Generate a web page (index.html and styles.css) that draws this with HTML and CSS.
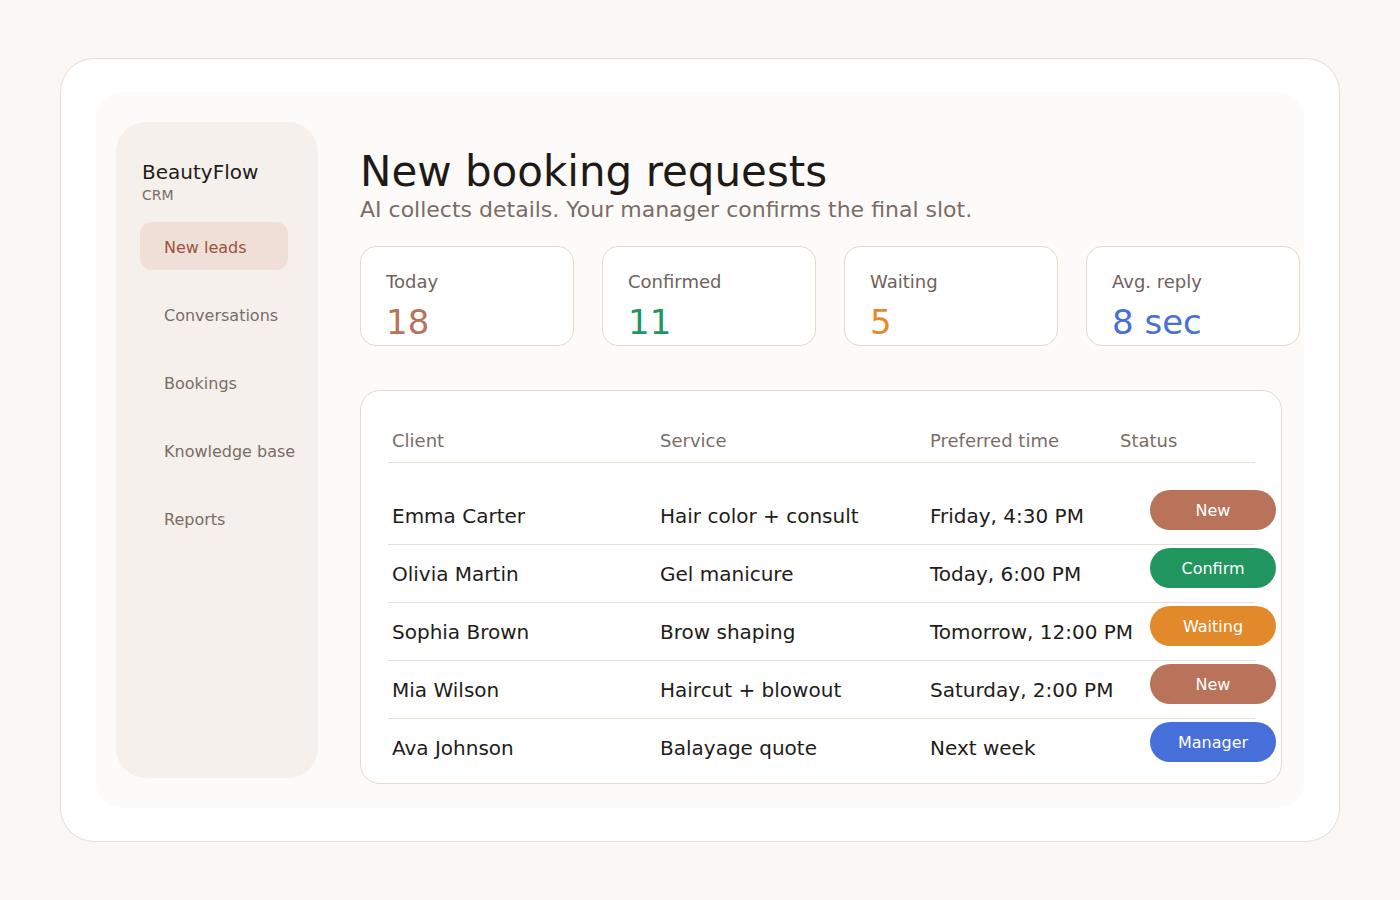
FILE: index.html
```html
<!DOCTYPE html>
<html lang="en">
<head>
    <meta charset="UTF-8">
    <meta name="viewport" content="width=device-width, initial-scale=1.0">
    <title>BeautyFlow CRM</title>
    <link rel="stylesheet" href="styles.css">
</head>
<body>
    <div class="frame">
        <div class="panel">
            <!-- Sidebar -->
            <aside class="sidebar">
                <div class="brand">BeautyFlow</div>
                <div class="brand-sub">CRM</div>
                <nav class="nav">
                    <a class="nav-item active">New leads</a>
                    <a class="nav-item">Conversations</a>
                    <a class="nav-item">Bookings</a>
                    <a class="nav-item">Knowledge base</a>
                    <a class="nav-item">Reports</a>
                </nav>
            </aside>

            <main class="main">
                <h1>New booking requests</h1>
                <p class="subtitle">AI collects details. Your manager confirms the final slot.</p>

                <!-- Stats -->
                <div class="stats">
                    <div class="stat">
                        <div class="stat-label">Today</div>
                        <div class="stat-value brown">18</div>
                    </div>
                    <div class="stat">
                        <div class="stat-label">Confirmed</div>
                        <div class="stat-value green">11</div>
                    </div>
                    <div class="stat">
                        <div class="stat-label">Waiting</div>
                        <div class="stat-value orange">5</div>
                    </div>
                    <div class="stat">
                        <div class="stat-label">Avg. reply</div>
                        <div class="stat-value blue">8 sec</div>
                    </div>
                </div>

                <!-- Requests table -->
                <div class="table-card">
                    <div class="row head">
                        <div class="cell">Client</div>
                        <div class="cell">Service</div>
                        <div class="cell">Preferred time</div>
                        <div class="cell">Status</div>
                    </div>
                    <div class="row first">
                        <div class="cell">Emma Carter</div>
                        <div class="cell">Hair color + consult</div>
                        <div class="cell">Friday, 4:30 PM</div>
                        <div class="cell"><span class="pill brown-bg">New</span></div>
                    </div>
                    <div class="row">
                        <div class="cell">Olivia Martin</div>
                        <div class="cell">Gel manicure</div>
                        <div class="cell">Today, 6:00 PM</div>
                        <div class="cell"><span class="pill green-bg">Confirm</span></div>
                    </div>
                    <div class="row">
                        <div class="cell">Sophia Brown</div>
                        <div class="cell">Brow shaping</div>
                        <div class="cell">Tomorrow, 12:00 PM</div>
                        <div class="cell"><span class="pill orange-bg">Waiting</span></div>
                    </div>
                    <div class="row">
                        <div class="cell">Mia Wilson</div>
                        <div class="cell">Haircut + blowout</div>
                        <div class="cell">Saturday, 2:00 PM</div>
                        <div class="cell"><span class="pill brown-bg">New</span></div>
                    </div>
                    <div class="row last">
                        <div class="cell">Ava Johnson</div>
                        <div class="cell">Balayage quote</div>
                        <div class="cell">Next week</div>
                        <div class="cell"><span class="pill blue-bg">Manager</span></div>
                    </div>
                </div>
            </main>
        </div>
    </div>
</body>
</html>
```

FILE: styles.css
```css
* {
    box-sizing: border-box;
}
body {
    margin: 0;
    padding: 58px 60px;
    background-color: #faf7f4;
    font-family: "DejaVu Sans", sans-serif;
    color: #221c19;
}
.frame {
    height: 784px;
    padding: 33px 35px;
    background-color: #fff;
    border: 1px solid #e8dcd2;
    border-radius: 34px;
}
.panel {
    display: flex;
    gap: 42px;
    height: 716px;
    padding: 30px 4px 30px 20px;
    background-color: #fdfbf9;
    border-radius: 26px;
}

/* Sidebar */
.sidebar {
    width: 202px;
    flex-shrink: 0;
    padding: 38px 0 0 24px;
    background-color: #f5f0ec;
    border-radius: 30px;
}
.brand {
    margin-left: 2px;
    font-size: 20px;
    line-height: 24px;
    color: #221c19;
}
.brand-sub {
    margin: 3px 0 0 2px;
    font-size: 14px;
    line-height: 17px;
    color: #7a6d66;
}
.nav {
    display: flex;
    flex-direction: column;
    gap: 20px;
    margin-top: 18px;
}
.nav-item {
    display: block;
    width: 148px;
    height: 48px;
    padding-left: 24px;
    font-size: 16px;
    line-height: 51px;
    white-space: nowrap;
    color: #7a6d66;
    border-radius: 12px;
}
.nav-item.active {
    background-color: #f0dfd7;
    color: #9a5340;
}

/* Main */
.main {
    flex: none;
    width: 940px;
    min-width: 0;
    padding-top: 25px;
}
h1 {
    margin: 0;
    font-size: 42px;
    font-weight: normal;
    line-height: 50px;
    color: #201a17;
}
.subtitle {
    margin: 0;
    font-size: 22px;
    line-height: 26px;
    color: #7a6d66;
}
.stats {
    display: grid;
    grid-template-columns: repeat(4, 214px);
    gap: 28px;
    margin-top: 23px;
}
.stat {
    height: 100px;
    padding: 24px 25px 0;
    background-color: #fff;
    border: 1px solid #e6d8cd;
    border-radius: 16px;
}
.stat-label {
    font-size: 18px;
    line-height: 22px;
    color: #6f625b;
}
.stat-value {
    margin-top: 9px;
    font-size: 34px;
    line-height: 40px;
}
.brown { color: #b8735a; }
.green { color: #1f955f; }
.orange { color: #e48a2d; }
.blue { color: #4a70d8; }

/* Table */
.table-card {
    width: 922px;
    height: 394px;
    margin-top: 44px;
    padding: 39px 26px 0 27px;
    background-color: #fff;
    border: 1px solid #e6d8cd;
    border-radius: 20px;
}
.row {
    display: grid;
    grid-template-columns: 268px 270px 190px 139px;
    padding: 17px 0 16px;
    border-bottom: 1px solid #eadfd5;
    font-size: 20px;
    line-height: 24px;
}
.row.head {
    padding: 0 0 10px;
    font-size: 18px;
    line-height: 22px;
    color: #7a6d66;
}
.row.first {
    padding-top: 41px;
}
.row.last {
    border-bottom: none;
}
.cell {
    padding-left: 4px;
    white-space: nowrap;
}
.pill {
    display: block;
    width: 126px;
    height: 40px;
    margin: -14px 0 -2px 30px;
    font-size: 16px;
    line-height: 41px;
    text-align: center;
    color: #fff;
    border-radius: 20px;
}
.brown-bg { background-color: #b8735a; }
.green-bg { background-color: #21965f; }
.orange-bg { background-color: #e2892c; }
.blue-bg { background-color: #476fd9; }
```
